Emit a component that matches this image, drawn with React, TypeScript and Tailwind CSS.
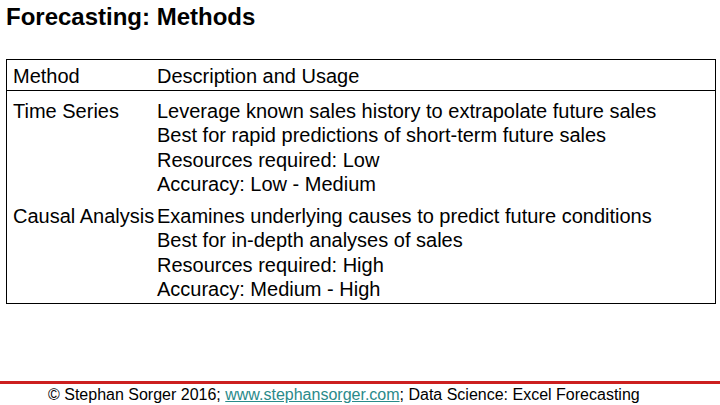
const rows = [
  {
    method: "Time Series",
    lines: [
      "Leverage known sales history to extrapolate future sales",
      "Best for rapid predictions of short-term future sales",
      "Resources required: Low",
      "Accuracy: Low - Medium",
    ],
  },
  {
    method: "Causal Analysis",
    lines: [
      "Examines underlying causes to predict future conditions",
      "Best for in-depth analyses of sales",
      "Resources required: High",
      "Accuracy: Medium - High",
    ],
  },
];

export default function App() {
  return (
    <div
      className="w-[720px] h-[405px] bg-white text-black flex flex-col overflow-hidden"
      style={{ fontFamily: '"Liberation Sans", Arial, sans-serif' }}
    >
      <h1 className="pl-[6px] pt-[3px] text-[24px] leading-[28px] font-bold">
        Forecasting: Methods
      </h1>

      <div className="mt-[28px] ml-[6px] w-[710px] border border-black">
        <div className="flex border-b border-black pt-[4px] pb-[1px] text-[20px] leading-[24.5px]">
          <div className="w-[150px] pl-[6px]">Method</div>
          <div>Description and Usage</div>
        </div>
        {rows.map((row, i) => (
          <div
            key={row.method}
            className={`flex text-[20px] leading-[24.5px] ${i === 0 ? "pt-[8px]" : "pt-[7px] pb-[1px]"}`}
          >
            <div className="w-[150px] pl-[6px] whitespace-nowrap">{row.method}</div>
            <div className="flex flex-col">
              {row.lines.map((l) => (
                <span key={l}>{l}</span>
              ))}
            </div>
          </div>
        ))}
      </div>

      <div className="flex-1" />
      <div className="h-[3px] bg-[#cc1f1f]" />
      <div className="pl-[48px] pt-[1px] pb-[1px] text-[16px] leading-[19px]">
        © Stephan Sorger 2016;{" "}
        <span className="text-[#2a8a8a] underline">www.stephansorger.com</span>; Data
        Science: Excel Forecasting
      </div>
    </div>
  );
}
